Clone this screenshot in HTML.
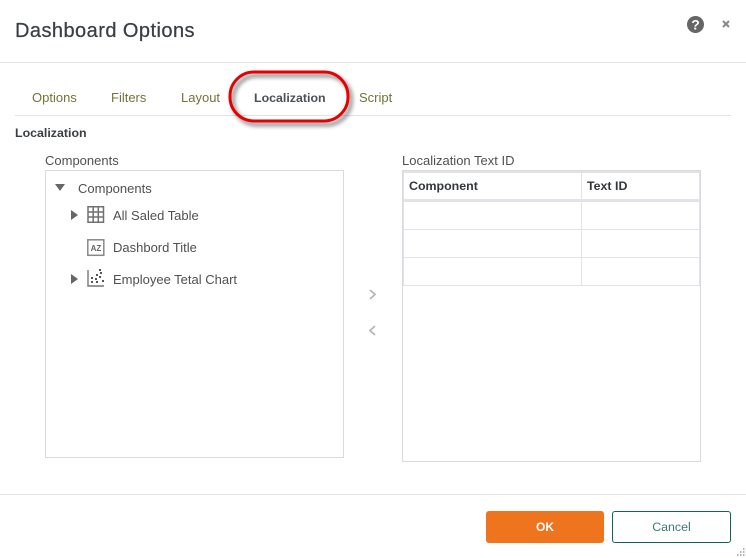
<!DOCTYPE html>
<html><head><meta charset="utf-8"><style>
html,body{margin:0;padding:0;background:#fff}
body{width:746px;height:558px;position:relative;overflow:hidden;font-family:"Liberation Sans",sans-serif;font-size:13px;color:#505050}
.a{position:absolute;white-space:nowrap}
.l{position:absolute;background:#e2e2e8}
.tab{position:absolute;top:90px;color:#73733a;font-size:13px;white-space:nowrap}
</style></head><body>
<div class="a" style="left:15px;top:20px;font-size:20px;letter-spacing:.45px;color:#3a3f44;-webkit-text-stroke:.25px #3a3f44">Dashboard Options</div>
<svg class="a" style="left:686px;top:15px" width="50" height="20">
<circle cx="9.500" cy="9.500" r="8.500" fill="#666"/>
<text x="9.500" y="14.500" text-anchor="middle" font-family="Liberation Sans" font-weight="bold" font-size="14" fill="#fff">?</text>
<path d="M37 6l6 6M43 6l-6 6" stroke="#888" stroke-width="2"/>
</svg>
<div class="l" style="left:0;top:62px;width:746px;height:1px"></div>
<div class="tab" style="left:32px">Options</div>
<div class="tab" style="left:111px">Filters</div>
<div class="tab" style="left:181px">Layout</div>
<div class="tab" style="left:254px;color:#4a5058;font-weight:bold;font-size:12.4px;top:91px">Localization</div>
<div class="tab" style="left:359px">Script</div>
<div class="l" style="left:15px;top:115px;width:716px;height:1px"></div>
<svg class="a" style="left:220px;top:62px" width="145" height="72">
<defs><filter id="s" x="-20%" y="-30%" width="140%" height="170%"><feDropShadow dx="3" dy="3.500" stdDeviation="2.200" flood-color="#000" flood-opacity=".55"/></filter></defs>
<rect x="10" y="10" width="118" height="49" rx="24" ry="24" fill="none" stroke="#e60000" stroke-width="3" filter="url(#s)"/>
</svg>
<div class="a" style="left:15px;top:126px;font-weight:bold;color:#3a3f44;font-size:12.4px">Localization</div>
<div class="a" style="left:45px;top:153px">Components</div>
<div class="a" style="left:45px;top:170px;width:297px;height:286px;border:1px solid #d9d9de"></div>
<svg class="a" style="left:50px;top:178px" width="60" height="115">
<path d="M5 6h10l-5 7z" fill="#666"/>
<path d="M21 32l7 5-7 5zM21 96l7 5-7 5z" fill="#666"/>
<path d="M38 28.700h15.500v15.500h-15.500zM38 34h15.500M38 39h15.500M43.200 28.700v15.500M48.300 28.700v15.500" fill="none" stroke="#707070" stroke-width="1.500"/>
<rect x="37.800" y="61.800" width="16" height="15.500" fill="none" stroke="#888" stroke-width="1.500"/>
<text x="46" y="73" text-anchor="middle" font-family="Liberation Sans" font-weight="bold" font-size="8" fill="#666">AZ</text>
<path d="M38 92v16h16" fill="none" stroke="#777" stroke-width="1.400"/>
<path d="M41 104h2M41 100h2M45 101h2M46 97h2M50 95h2M49 99h2M52 103h2M46 104h2M49 92h2" stroke="#555" stroke-width="2"/>
</svg>
<div class="a" style="left:78px;top:181px">Components</div>
<div class="a" style="left:113px;top:208px">All Saled Table</div>
<div class="a" style="left:113px;top:240px">Dashbord Title</div>
<div class="a" style="left:113px;top:272px">Employee Tetal Chart</div>
<svg class="a" style="left:366px;top:286px" width="14" height="54">
<path d="M4 4l5 4.500-5 4.500M9 40l-5 4.500 5 4.500" fill="none" stroke="#b4b4b4" stroke-width="1.700"/>
</svg>
<div class="a" style="left:402px;top:153px">Localization Text ID</div>
<div class="a" style="left:402px;top:170px;width:297px;height:290px;border:1px solid #d9d9de"></div>
<div class="l" style="left:403px;top:171px;width:297px;height:2px"></div>
<div class="l" style="left:403px;top:199px;width:297px;height:3px"></div>
<div class="l" style="left:403px;top:229px;width:297px;height:1px"></div>
<div class="l" style="left:403px;top:257px;width:297px;height:1px"></div>
<div class="l" style="left:403px;top:285px;width:297px;height:1px"></div>
<div class="l" style="left:403px;top:171px;width:1px;height:115px"></div>
<div class="l" style="left:699px;top:171px;width:1px;height:115px"></div>
<div class="l" style="left:581px;top:171px;width:1px;height:115px"></div>
<div class="a" style="left:409px;top:179px;font-weight:bold;color:#33373b;font-size:12.4px">Component</div>
<div class="a" style="left:587px;top:179px;font-weight:bold;color:#33373b;font-size:12.4px">Text ID</div>
<div class="l" style="left:0;top:494px;width:746px;height:1px"></div>
<div class="a" style="left:486px;top:511px;width:118px;height:32px;background:#ee741e;border-radius:3px;color:#fff;font-weight:bold;font-size:12px;text-align:center;line-height:32px">OK</div>
<div class="a" style="left:612px;top:511px;width:117px;height:30px;border:1px solid #0f6358;border-radius:3px;color:#3e7a72;font-size:12.4px;text-align:center;line-height:30px">Cancel</div>
<svg class="a" style="left:736px;top:548px" width="10" height="10"><path d="M7 1h1.500M4 4h1.500M7 4h1.500M1 7h1.500M4 7h1.500M7 7h1.500" stroke="#999" stroke-width="1.500"/></svg>
</body></html>
